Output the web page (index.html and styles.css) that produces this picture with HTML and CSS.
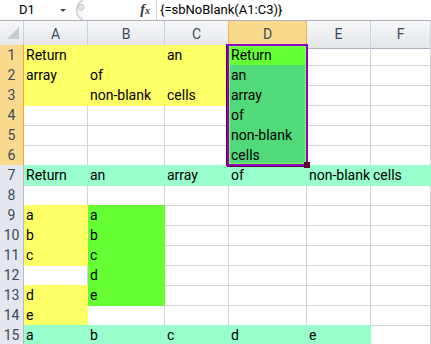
FILE: index.html
```html
<!DOCTYPE html>
<html lang="en">
<head>
  <meta charset="UTF-8">
  <title>sbNoBlank</title>
  <link rel="stylesheet" href="styles.css">
</head>
<body>
  <div class="formula-bar">
    <div class="name-box">D1<span class="arrow"></span></div>
    <svg class="grip" width="20" height="20" viewBox="0 0 20 20">
      <path d="M14 0 A11 11 0 0 0 14 20" fill="#f7f7f7" stroke="#cfcfcf" stroke-width="1.5"/>
      <circle cx="12" cy="7" r="3" fill="#e6e6e6" stroke="#c9c9c9"/>
    </svg>
    <div class="fx-box"><span class="fx">f<sub>x</sub></span></div>
    <div class="formula">{=sbNoBlank(A1:C3)}</div>
  </div>

  <div class="sheet">
    <div class="row head">
      <div class="corner">
        <svg width="24" height="23" viewBox="0 0 24 23"><polygon points="7,18 19,18 19,6" fill="#c8ccd2"/></svg>
      </div>
      <div class="col">A</div>
      <div class="col">B</div>
      <div class="col">C</div>
      <div class="col sel">D</div>
      <div class="col">E</div>
      <div class="col">F</div>
    </div>

    <div class="row">
      <div class="rh sel">1</div>
      <div class="c y">Return</div><div class="c y"></div><div class="c y">an</div>
      <div class="c g">Return</div><div class="c"></div><div class="c"></div>
    </div>
    <div class="row">
      <div class="rh sel">2</div>
      <div class="c y">array</div><div class="c y">of</div><div class="c y"></div>
      <div class="c s">an</div><div class="c"></div><div class="c"></div>
    </div>
    <div class="row">
      <div class="rh sel">3</div>
      <div class="c y"></div><div class="c y">non-blank</div><div class="c y">cells</div>
      <div class="c s">array</div><div class="c"></div><div class="c"></div>
    </div>
    <div class="row">
      <div class="rh sel">4</div>
      <div class="c"></div><div class="c"></div><div class="c"></div>
      <div class="c s">of</div><div class="c"></div><div class="c"></div>
    </div>
    <div class="row">
      <div class="rh sel">5</div>
      <div class="c"></div><div class="c"></div><div class="c"></div>
      <div class="c s">non-blank</div><div class="c"></div><div class="c"></div>
    </div>
    <div class="row">
      <div class="rh sel">6</div>
      <div class="c"></div><div class="c"></div><div class="c"></div>
      <div class="c s">cells</div><div class="c"></div><div class="c"></div>
    </div>
    <div class="row">
      <div class="rh">7</div>
      <div class="c m">Return</div><div class="c m">an</div><div class="c m">array</div>
      <div class="c m">of</div><div class="c m">non-blank</div><div class="c m">cells</div>
    </div>
    <div class="row">
      <div class="rh">8</div>
      <div class="c"></div><div class="c"></div><div class="c"></div>
      <div class="c"></div><div class="c"></div><div class="c"></div>
    </div>
    <div class="row">
      <div class="rh">9</div>
      <div class="c y">a</div><div class="c g">a</div><div class="c"></div>
      <div class="c"></div><div class="c"></div><div class="c"></div>
    </div>
    <div class="row">
      <div class="rh">10</div>
      <div class="c y">b</div><div class="c g">b</div><div class="c"></div>
      <div class="c"></div><div class="c"></div><div class="c"></div>
    </div>
    <div class="row">
      <div class="rh">11</div>
      <div class="c y">c</div><div class="c g">c</div><div class="c"></div>
      <div class="c"></div><div class="c"></div><div class="c"></div>
    </div>
    <div class="row">
      <div class="rh">12</div>
      <div class="c"></div><div class="c g">d</div><div class="c"></div>
      <div class="c"></div><div class="c"></div><div class="c"></div>
    </div>
    <div class="row">
      <div class="rh">13</div>
      <div class="c y">d</div><div class="c g">e</div><div class="c"></div>
      <div class="c"></div><div class="c"></div><div class="c"></div>
    </div>
    <div class="row">
      <div class="rh">14</div>
      <div class="c y">e</div><div class="c"></div><div class="c"></div>
      <div class="c"></div><div class="c"></div><div class="c"></div>
    </div>
    <div class="row">
      <div class="rh">15</div>
      <div class="c m">a</div><div class="c m">b</div><div class="c m">c</div>
      <div class="c m">d</div><div class="c m">e</div><div class="c"></div>
    </div>

    <div class="selection"><span class="handle"></span></div>
  </div>
</body>
</html>
```

FILE: styles.css
```css
body {
  margin: 0;
  width: 431px;
  height: 344px;
  overflow: hidden;
  background: #fff;
  font-family: Roboto, "Liberation Sans", sans-serif;
  color: #000;
}

/* formula bar */
.formula-bar {
  display: flex;
  height: 20px;
  border-bottom: 1px solid #a9b0b8;
  font-size: 13px;
  line-height: 20px;
}
.name-box {
  position: relative;
  width: 69px;
  padding-left: 19px;
  box-sizing: border-box;
}
.arrow {
  position: absolute;
  left: 60px;
  top: 9px;
  border-left: 3px solid transparent;
  border-right: 3px solid transparent;
  border-top: 3px solid #444;
}
.grip { flex: none; }
.fx-box {
  width: 68px;
  padding-right: 6px;
  box-sizing: border-box;
  border-right: 1px solid #d0d0d0;
  text-align: right;
}
.fx {
  font-family: "Liberation Serif", serif;
  font-style: italic;
  font-weight: bold;
  font-size: 14px;
  color: #333;
}
.fx sub { font-size: 10px; vertical-align: 0; }
.formula { padding-left: 3px; }

/* grid */
.sheet { position: relative; }
.row {
  display: grid;
  grid-template-columns: 24px 64px 77px 64px 78px 64px 60px;
  height: 20px;
}
.row.head { height: 24px; }

.corner, .col {
  background: linear-gradient(#f6f7f9, #e3e6ea);
  border-right: 1px solid #cdd2d9;
  border-bottom: 1px solid #aab3bf;
  box-sizing: border-box;
}
.col {
  padding-top: 3px;
  line-height: 20px;
  font-size: 14px;
  text-align: center;
  color: #3b4a5e;
}
.col.sel {
  background: #f9d98c;
  border-right-color: #f0b24b;
  border-bottom-color: #f0b24b;
  box-shadow: -1px 0 0 #f0b24b;
}

.rh {
  background: #e4e8ee;
  border-right: 1px solid #b6bcc6;
  border-bottom: 1px solid #cfd4db;
  box-sizing: border-box;
  padding-top: 1px;
  line-height: 19px;
  font-size: 14px;
  text-align: center;
  color: #3b4a5e;
}
.rh.sel {
  background: #f9d98c;
  border-right-color: #e9a93c;
  border-bottom-color: #efb74f;
}

.c {
  border-right: 1px solid #d4d4d4;
  border-bottom: 1px solid #d4d4d4;
  box-sizing: border-box;
  padding: 1px 2px 0;
  line-height: 19px;
  font-size: 14px;
  white-space: nowrap;
  overflow: hidden;
}
.c.y { background: #ffff66; border-color: transparent; }
.c.g { background: #66ff33; border-color: transparent; }
.c.m { background: #99ffcc; border-color: transparent; }
.c.s { background: #52d97a; border-color: transparent; }

/* selected range D1:D6 */
.selection {
  position: absolute;
  left: 227px;
  top: 23px;
  width: 81px;
  height: 122px;
  box-sizing: border-box;
  border: 2px solid #8a00c4;
  box-shadow: inset 0 0 0 1px #86ff55, 0 1px 0 #5c0036, -1px 0 0 #5c0036;
  pointer-events: none;
}
.handle {
  position: absolute;
  right: -4px;
  bottom: -4px;
  width: 6px;
  height: 6px;
  background: #5c0036;
}
```
